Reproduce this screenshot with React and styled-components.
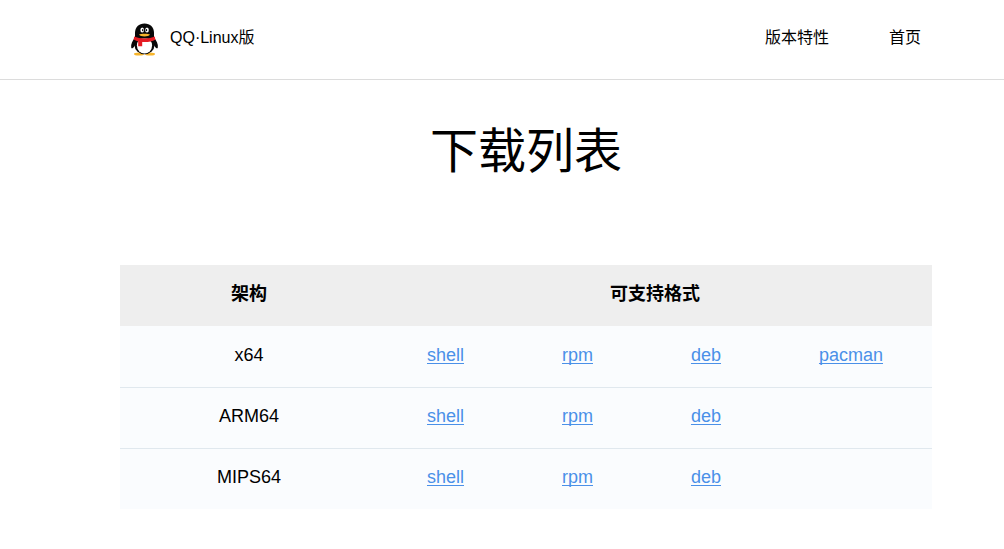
import React from "react";
import styled, { createGlobalStyle } from "styled-components";

const GlobalStyle = createGlobalStyle`
  *, *::before, *::after { box-sizing: border-box; }
  body {
    margin: 0;
    background: #fff;
    color: #000;
    font-family: "Liberation Sans", "Noto Sans CJK SC", sans-serif;
    font-size: 16px;
    line-height: 24px;
  }
`;

const Header = styled.header`
  display: flex;
  align-items: center;
  justify-content: space-between;
  height: 80px;
  padding: 0 83px 4px 128px;
  border-bottom: 1px solid #dcdcdc;
`;

const Brand = styled.a`
  display: flex;
  align-items: center;
  gap: 10px;
  color: inherit;
  text-decoration: none;
`;

const Logo = styled.svg`
  display: block;
  width: 32px;
  height: 36px;
`;

const Nav = styled.nav`
  display: flex;
  gap: 60px;
`;

const NavLink = styled.a`
  color: inherit;
  text-decoration: none;
`;

const Main = styled.main`
  padding: 36px 72px 38px 120px;
`;

const Title = styled.h1`
  margin: 0 0 77px;
  font-size: 48px;
  font-weight: 400;
  line-height: 72px;
  text-align: center;
`;

const Table = styled.table`
  width: 100%;
  table-layout: fixed;
  border-collapse: separate;
  border-spacing: 0;
  font-size: 18px;
  line-height: 28px;
  text-align: center;
`;

const Column = styled.col`
  width: ${(p) => p.$width}px;
`;

const HeadCell = styled.th`
  padding: 15px 0 18px;
  background: #eee;
  font-weight: 700;
`;

const Row = styled.tr`
  background: #fafcfe;
  & > * { border-top: 1px solid transparent; }
  &:not(:first-child) > * { border-top-color: #e0e8ee; }
`;

const RowHead = styled.th`
  padding: 14px 0 18px;
  font-weight: 400;
`;

const Cell = styled.td`
  padding: 14px 0 18px;
`;

const Download = styled.a`
  color: #4a90e8;
  text-decoration: underline;
  text-decoration-thickness: 1px;
  text-underline-offset: 2px;
  text-decoration-skip-ink: none;
`;

const columns = [258, 135, 129, 128, 162];
const formats = ["shell", "rpm", "deb", "pacman"];
const builds = [
  { arch: "x64", available: ["shell", "rpm", "deb", "pacman"] },
  { arch: "ARM64", available: ["shell", "rpm", "deb"] },
  { arch: "MIPS64", available: ["shell", "rpm", "deb"] },
];

function Penguin() {
  return (
    <Logo viewBox="0 0 32 36" aria-hidden="true">
      <ellipse cx="11" cy="33.9" rx="5" ry="1.5" fill="#f7b52c" />
      <ellipse cx="22" cy="33.9" rx="5" ry="1.5" fill="#f7b52c" />
      <path d="M7 17.5C4.5 20.5 2.6 24.5 3.2 27.5C3.6 29.3 5.2 28.1 6.6 25.9L9 20.5Z" fill="#080808" />
      <path d="M26 17.5C28.5 20.5 30.4 24.5 29.8 27.5C29.4 29.3 27.8 28.1 26.4 25.9L24 20.5Z" fill="#080808" />
      <ellipse cx="16.5" cy="25" rx="10" ry="9.2" fill="#080808" />
      <ellipse cx="16.5" cy="25.6" rx="7.6" ry="7.9" fill="#fff" />
      <path d="M7 18.5V13C7 7 10.8 3.4 16.5 3.4S26 7 26 13V18.5Z" fill="#080808" />
      <ellipse cx="14.2" cy="9.9" rx="1.8" ry="2.5" fill="#fff" />
      <ellipse cx="19" cy="9.9" rx="1.8" ry="2.5" fill="#fff" />
      <ellipse cx="14.7" cy="10.2" rx=".7" ry="1.1" fill="#080808" />
      <ellipse cx="18.5" cy="10.2" rx=".7" ry="1.1" fill="#080808" />
      <path d="M11 14.6C12.5 13.3 20.5 13.3 22 14.6C20.9 16 19.2 16.5 16.5 16.5S12.1 16 11 14.6Z" fill="#f7b52c" />
      <path d="M6.2 16.6C12 19.2 21 19.2 26.8 16.6L27.4 19.8C24 21.8 19 22.3 14.2 22V26.2H10.2V21.4C8.4 21 6.8 20.4 5.6 19.6Z" fill="#e51c23" />
    </Logo>
  );
}

export default function App() {
  return (
    <>
      <GlobalStyle />
      <Header>
        <Brand href="#home">
          <Penguin />
          <span>QQ·Linux版</span>
        </Brand>
        <Nav>
          <NavLink href="#features">版本特性</NavLink>
          <NavLink href="#home">首页</NavLink>
        </Nav>
      </Header>
      <Main>
        <Title>下载列表</Title>
        <Table>
          <colgroup>
            {columns.map((width, i) => <Column key={i} $width={width} />)}
          </colgroup>
          <thead>
            <tr>
              <HeadCell scope="col">架构</HeadCell>
              <HeadCell scope="colgroup" colSpan={4}>可支持格式</HeadCell>
            </tr>
          </thead>
          <tbody>
            {builds.map(({ arch, available }) => (
              <Row key={arch}>
                <RowHead scope="row">{arch}</RowHead>
                {formats.map((format) => (
                  <Cell key={format}>
                    {available.includes(format) && (
                      <Download href={`#${arch}-${format}`}>{format}</Download>
                    )}
                  </Cell>
                ))}
              </Row>
            ))}
          </tbody>
        </Table>
      </Main>
    </>
  );
}
